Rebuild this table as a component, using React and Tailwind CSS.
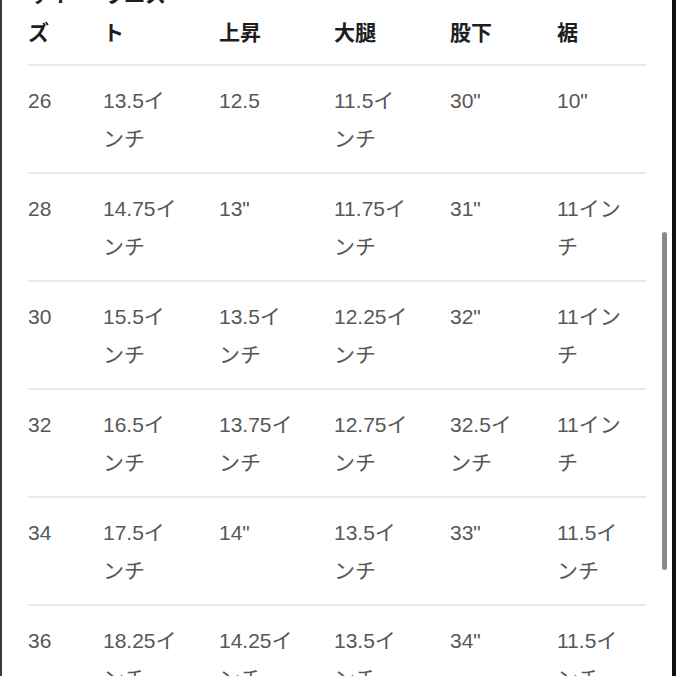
import React from 'react';

const rows = [
  ['26', '13.5インチ', '12.5', '11.5インチ', '30"', '10"'],
  ['28', '14.75インチ', '13"', '11.75インチ', '31"', '11インチ'],
  ['30', '15.5インチ', '13.5インチ', '12.25インチ', '32"', '11インチ'],
  ['32', '16.5インチ', '13.75インチ', '12.75インチ', '32.5インチ', '11インチ'],
  ['34', '17.5インチ', '14"', '13.5インチ', '33"', '11.5インチ'],
  ['36', '18.25インチ', '14.25インチ', '13.5インチ', '34"', '11.5インチ'],
];

const headers = ['サイズ', 'ウエスト', '上昇', '大腿', '股下', '裾'];

// column paddings so the text wraps like the original table
const cellPad = ['pr-[24px]', 'pr-[36px]', 'pr-[36px]', 'pr-[36px]', 'pr-[36px]', 'pr-[12px]'];

const Row = ({ cells, head }) => (
  <div
    className={`grid grid-cols-[75px_116px_115px_116px_107px_89px] border-b-2 border-[#e8e8e8] ${
      head ? 'items-end pt-[16px] pb-[12px]' : 'items-start pt-[16px] pb-[14px]'
    }`}
  >
    {cells.map((c, i) => (
      <div
        key={i}
        className={`${cellPad[i]} break-all ${head ? 'font-bold text-[#1e1e1e]' : 'text-[#575757]'}`}
      >
        {c}
      </div>
    ))}
  </div>
);

export default function App() {
  return (
    <div
      className="relative w-[676px] h-[676px] overflow-hidden bg-white border-l-2 border-l-[#3a3a3a] border-r-4 border-r-[#111]"
      style={{ fontFamily: '"Liberation Sans", "Noto Sans CJK JP", sans-serif' }}
    >
      <div className="ml-[26px] w-[618px] mt-[-40px] text-[21px] leading-[38px]">
        <Row cells={headers} head />
        {rows.map((r) => (
          <Row key={r[0]} cells={r} />
        ))}
      </div>
      {/* scrollbar thumb */}
      <div className="absolute right-[5px] top-[232px] h-[338px] w-[5px] rounded-full bg-[#8a8a8a]" />
    </div>
  );
}
